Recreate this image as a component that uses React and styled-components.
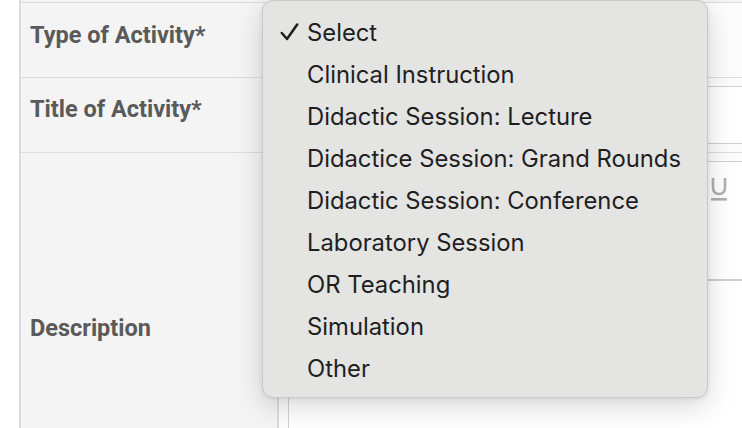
import React from 'react';
import styled, { createGlobalStyle } from 'styled-components';

const GlobalStyle = createGlobalStyle`
    html, body {
        margin: 0;
        padding: 0;
        background: #fff;
        overflow: hidden;
    }
    body {
        font-family: Roboto, "Liberation Sans", sans-serif;
    }
`;

const activityTypes = [
    'Select',
    'Clinical Instruction',
    'Didactic Session: Lecture',
    'Didactice Session: Grand Rounds',
    'Didactic Session: Conference',
    'Laboratory Session',
    'OR Teaching',
    'Simulation',
    'Other',
];

const Check = () => (
    <svg width="19" height="18" viewBox="0 0 19 18">
        <path d="M1.8 10 L7 16 L17.2 1.5" fill="none" stroke="#1f1f1f" strokeWidth="2.5" strokeLinecap="round" strokeLinejoin="round" />
    </svg>
);

const Underline = () => (
    <svg width="18" height="24" viewBox="0 0 18 24">
        <path d="M3 1 V10 Q3 17 9 17 Q15 17 15 10 V1" fill="none" stroke="#b0b0b0" strokeWidth="2.6" />
        <rect x="1" y="21" width="16" height="2.6" fill="#b0b0b0" />
    </svg>
);

export default function App() {
    const selected = 'Select';

    return (
        <Page>
            <GlobalStyle />
            <Form>
                <TopRow />
                <Row height={75}>
                    <Label top={19}>Type of Activity*</Label>
                    <Value />
                </Row>
                <Row height={75}>
                    <Label>Title of Activity*</Label>
                    <Value>
                        <TextInput />
                    </Value>
                </Row>
                <Row height={300}>
                    <Label top={162}>Description</Label>
                    <Value>
                        <Editor>
                            <Toolbar>
                                <Underline />
                            </Toolbar>
                        </Editor>
                    </Value>
                </Row>
            </Form>

            <Menu>
                {activityTypes.map((name) => (
                    <Option key={name}>
                        <Mark>{name === selected && <Check />}</Mark>
                        {name}
                    </Option>
                ))}
            </Menu>
        </Page>
    );
}

const Page = styled.div`
    position: relative;
    width: 742px;
    height: 428px;
    overflow: hidden;
    padding-left: 19px;
    box-sizing: border-box;
`;

const Form = styled.div`
    border-left: 2px solid #dcdcdc;
    display: flex;
    flex-direction: column;
`;

const TopRow = styled.div`
    height: 2px;
    background: #f4f4f4;
    border-bottom: 1.5px solid #dcdcdc;
`;

const Row = styled.div`
    display: grid;
    grid-template-columns: 258px 1fr;
    height: ${props => props.height}px;
    box-sizing: border-box;
    border-bottom: 1.5px solid #dcdcdc;
`;

const Label = styled.div`
    background: #f4f4f4;
    border-right: 2px solid #dcdcdc;
    color: #5a5a5a;
    font-weight: 700;
    font-size: 23.5px;
    line-height: 27px;
    padding: ${props => props.top || 18}px 10px 0 9px;
`;

const Value = styled.div`
    background: #fcfcfc;
    padding: 8px 0 0 9px;
`;

const TextInput = styled.div`
    height: 56px;
    border: 1px solid #d0d0d0;
    border-right: none;
    background: #fff;
`;

const Editor = styled.div`
    height: 400px;
    border: 1px solid #d0d0d0;
    border-right: none;
    background: #fff;
`;

const Toolbar = styled.div`
    height: 119px;
    border-bottom: 2px solid #cfcfcf;
    display: flex;
    justify-content: flex-end;
    align-items: flex-start;
    padding: 15px 14px 0 0;
    box-sizing: border-box;
`;

const Menu = styled.div`
    position: absolute;
    left: 262px;
    top: 0;
    width: 446px;
    height: 398px;
    box-sizing: border-box;
    padding-top: 10px;
    background: #e4e4e3;
    border: 1px solid #c9c9c9;
    border-radius: 11px;
    box-shadow: 0 8px 28px rgba(0, 0, 0, 0.16), 0 1px 4px rgba(0, 0, 0, 0.08);
    font-family: Inter, "Liberation Sans", sans-serif;
    font-size: 23.8px;
    color: #1f1f1f;
`;

const Option = styled.div`
    display: flex;
    align-items: center;
    height: 42px;
`;

const Mark = styled.span`
    width: 44px;
    padding-left: 17px;
    box-sizing: border-box;
    display: flex;
    align-items: center;
`;
